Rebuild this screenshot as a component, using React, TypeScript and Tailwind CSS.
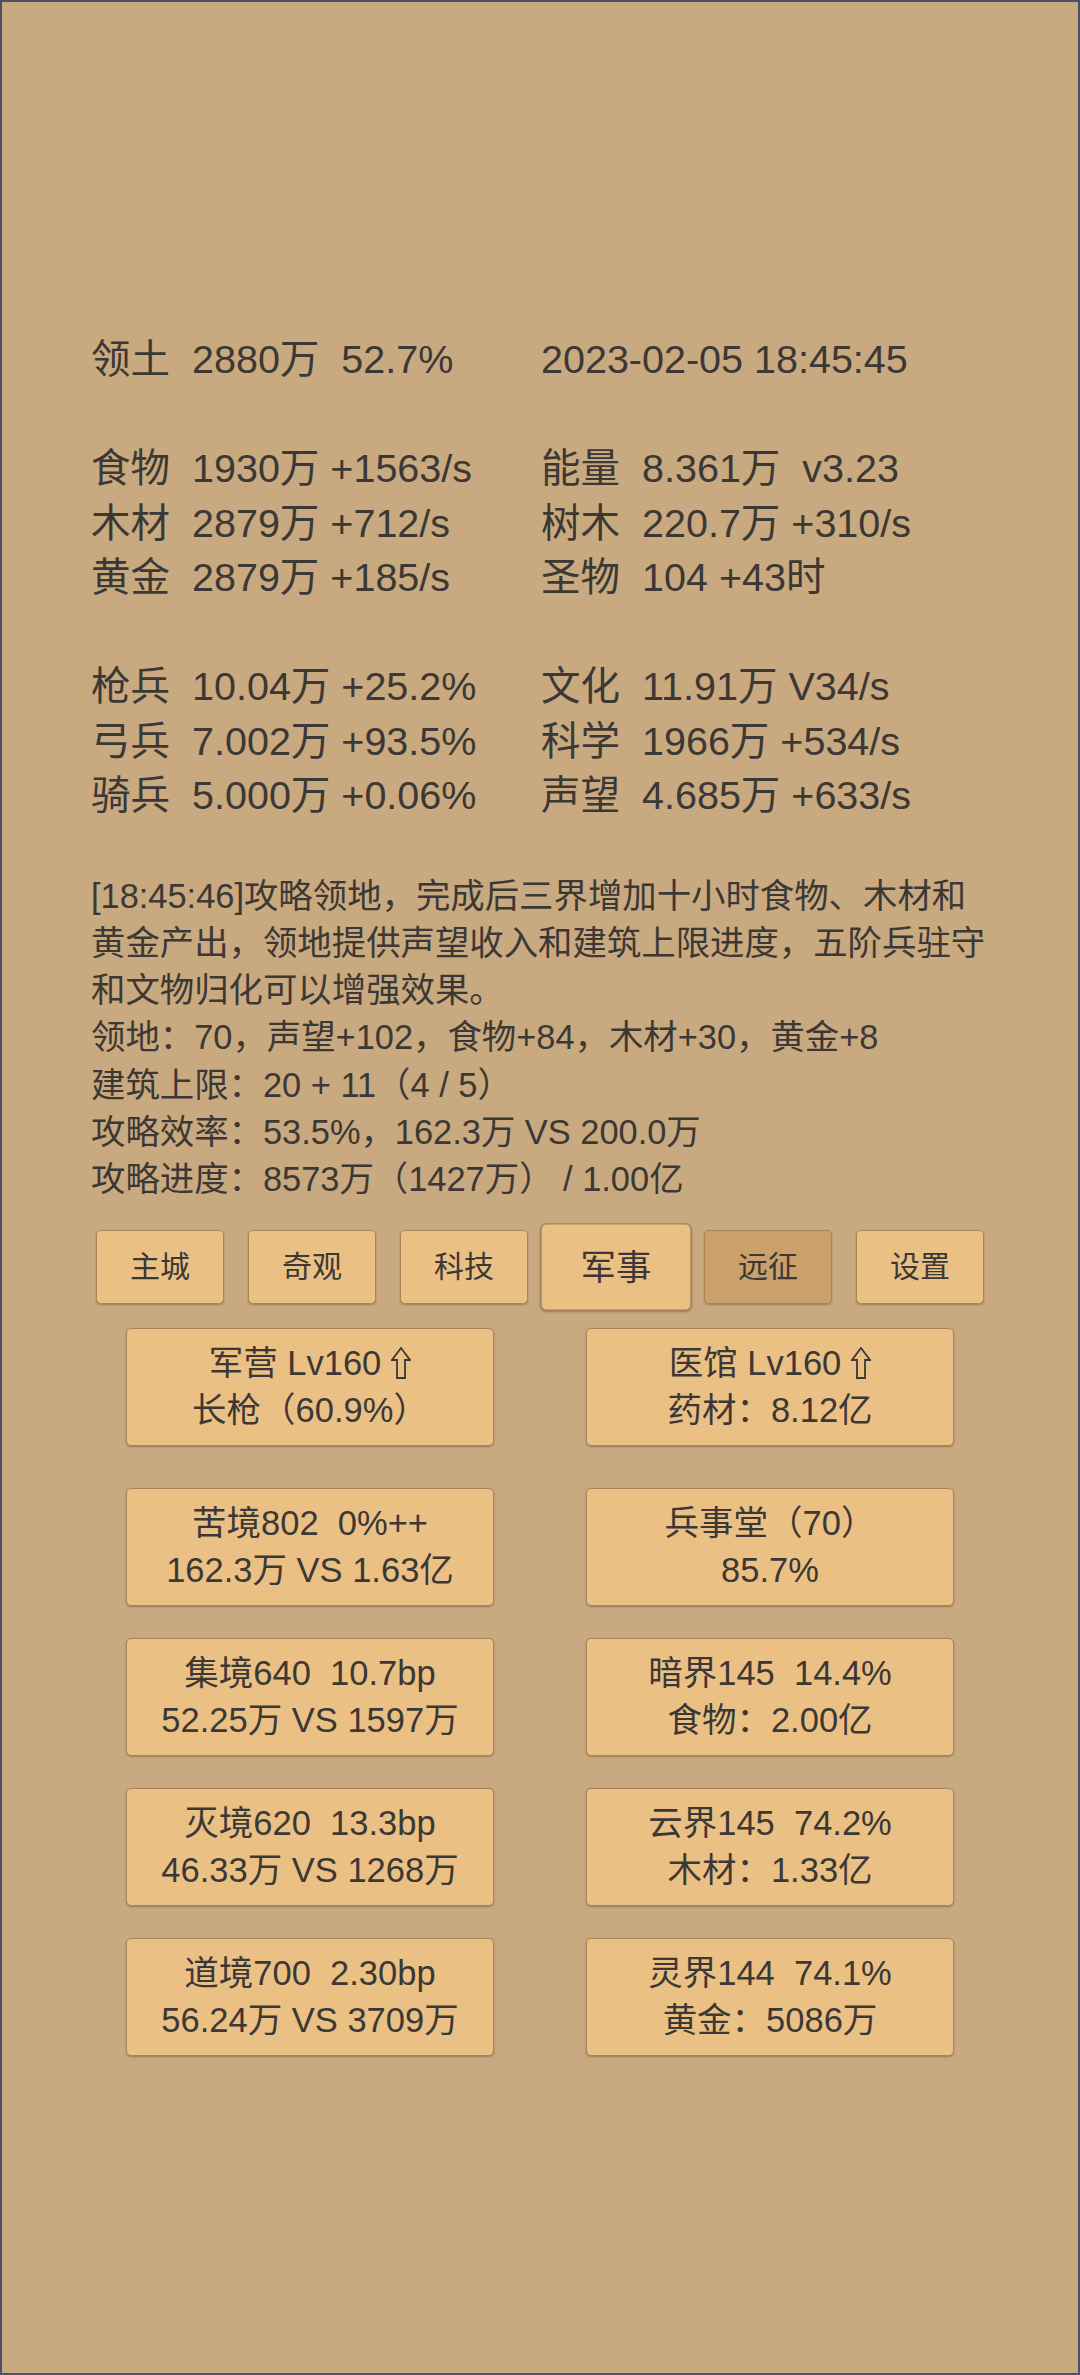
import React from "react";

const FONT = { fontFamily: '"Liberation Sans", "Noto Sans CJK SC", sans-serif' };

type Stat = { label: string; value: string } | null;

const statRows: [Stat, Stat][] = [
  [{ label: "领土", value: "2880万  52.7%" }, { label: "", value: "2023-02-05 18:45:45" }],
  [null, null],
  [{ label: "食物", value: "1930万 +1563/s" }, { label: "能量", value: "8.361万  v3.23" }],
  [{ label: "木材", value: "2879万 +712/s" }, { label: "树木", value: "220.7万 +310/s" }],
  [{ label: "黄金", value: "2879万 +185/s" }, { label: "圣物", value: "104 +43时" }],
  [null, null],
  [{ label: "枪兵", value: "10.04万 +25.2%" }, { label: "文化", value: "11.91万 V34/s" }],
  [{ label: "弓兵", value: "7.002万 +93.5%" }, { label: "科学", value: "1966万 +534/s" }],
  [{ label: "骑兵", value: "5.000万 +0.06%" }, { label: "声望", value: "4.685万 +633/s" }],
];

const logLines = [
  "[18:45:46]攻略领地，完成后三界增加十小时食物、木材和",
  "黄金产出，领地提供声望收入和建筑上限进度，五阶兵驻守",
  "和文物归化可以增强效果。",
  "领地：70，声望+102，食物+84，木材+30，黄金+8",
  "建筑上限：20 + 11（4 / 5）",
  "攻略效率：53.5%，162.3万 VS 200.0万",
  "攻略进度：8573万（1427万） / 1.00亿",
];

const tabs = [
  { name: "主城" },
  { name: "奇观" },
  { name: "科技" },
  { name: "军事", active: true },
  { name: "远征", dim: true },
  { name: "设置" },
];

const cards: { top: string; bottom: string; up?: boolean }[] = [
  { top: "军营 Lv160", bottom: "长枪（60.9%）", up: true },
  { top: "医馆 Lv160", bottom: "药材：8.12亿", up: true },
  { top: "苦境802  0%++", bottom: "162.3万 VS 1.63亿" },
  { top: "兵事堂（70）", bottom: "85.7%" },
  { top: "集境640  10.7bp", bottom: "52.25万 VS 1597万" },
  { top: "暗界145  14.4%", bottom: "食物：2.00亿" },
  { top: "灭境620  13.3bp", bottom: "46.33万 VS 1268万" },
  { top: "云界145  74.2%", bottom: "木材：1.33亿" },
  { top: "道境700  2.30bp", bottom: "56.24万 VS 3709万" },
  { top: "灵界144  74.1%", bottom: "黄金：5086万" },
];

function UpArrow() {
  return (
    <svg width="20" height="32" viewBox="0 0 20 32" className="inline-block ml-[10px] -mt-[4px] align-middle">
      <path
        d="M10 1 L19 13 L14 13 L14 31 L6 31 L6 13 L1 13 Z"
        fill="none"
        stroke="#3b3835"
        strokeWidth="1.8"
        strokeLinejoin="miter"
      />
    </svg>
  );
}

function StatCell({ s }: { s: Stat }) {
  if (!s) return <div>&nbsp;</div>;
  return (
    <div className="flex whitespace-pre">
      {s.label && <span className="w-[101px] shrink-0">{s.label}</span>}
      <span>{s.value}</span>
    </div>
  );
}

export default function App() {
  return (
    <div
      className="box-border h-[2375px] w-[1080px] border-2 border-[#4e5268] bg-[#c9a97f] text-[#3b3835] pt-[330px]"
      style={FONT}
    >
      {/* Resource stats */}
      <div className="pl-[89px] text-[39.5px] leading-[54.5px]">
        {statRows.map((row, i) => (
          <div key={i} className="grid grid-cols-[450px_1fr]">
            <StatCell s={row[0]} />
            <StatCell s={row[1]} />
          </div>
        ))}
      </div>

      {/* Log */}
      <div className="mt-[50px] pl-[89px] text-[34.4px] leading-[47.3px] whitespace-pre">
        {logLines.map((l, i) => (
          <div key={i}>{l}</div>
        ))}
      </div>

      {/* Tabs */}
      <div className="mt-[26px] flex justify-center gap-[24px]">
        {tabs.map((t) => (
          <div
            key={t.name}
            className={
              "flex h-[74px] w-[128px] items-center justify-center rounded-[5px] border border-[#a8845b] text-[30px] shadow-[0_1px_2px_rgba(0,0,0,0.25)] " +
              (t.active
                ? "scale-[1.18] bg-[#ebc084]"
                : t.dim
                ? "bg-[#cba06b]"
                : "bg-[#ebc084]")
            }
          >
            {t.name}
          </div>
        ))}
      </div>

      {/* Building cards */}
      <div className="mt-[24px] grid grid-cols-[368px_368px] justify-center gap-x-[92px] gap-y-[32px]">
        {cards.map((c, i) => (
          <div
            key={i}
            className={
              "box-border flex h-[118px] flex-col items-center justify-center rounded-[5px] border border-[#a8845b] bg-[#ebc084] text-[34.5px] leading-[47px] whitespace-pre shadow-[0_1px_2px_rgba(0,0,0,0.25)] " +
              (i < 2 ? "mb-[10px]" : "")
            }
          >
            <div>
              {c.top}
              {c.up && <UpArrow />}
            </div>
            <div>{c.bottom}</div>
          </div>
        ))}
      </div>
    </div>
  );
}
